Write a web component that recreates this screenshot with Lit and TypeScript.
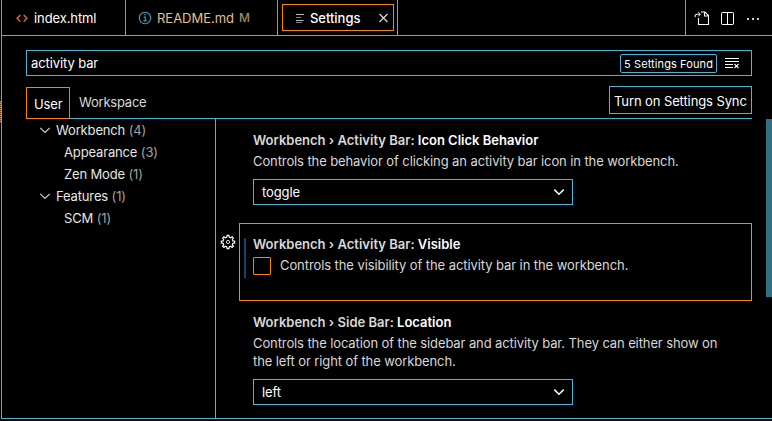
import { LitElement, html, css, svg, nothing } from "lit";
import { customElement, property } from "lit/decorators.js";

const icons: Record<string, unknown> = {
  code: svg`<path d="M6.3 5 3 8.3l3.3 3.3M9.700 5 13 8.300l-3.300 3.300" stroke="#e37933" stroke-width="1.3"/>`,
  info: svg`<circle cx="8" cy="8" r="5.7" stroke="#519aba" stroke-width="1.1"/><path d="M6.7 7.1h1.6v3.7M6.4 10.9h3.4" stroke="#519aba" stroke-width="1.1"/><path d="M7.3 4.6h1.4" stroke="#519aba" stroke-width="1.4"/>`,
  lines: svg`<path d="M4 4.5h8M4 10.5h7.5" stroke="#b9bfc0"/><path d="M4 7.5h5M4 12.5h6" stroke="#818788"/>`,
  close: svg`<path d="m4.500 4 8 8M12.500 4l-8 8" stroke="#e4e4e4" stroke-width="1.1"/>`,
  gotoFile: svg`<path d="M4.500 8v6.500h10V5.500L11 2H7M10.500 2v4h4" stroke="#fff" stroke-width="1.1"/><path d="M1.2 7.200Q.2 4.200 3 4.200h3M4.200 2l2.200 2.200L4.200 6.400" stroke="#fff" stroke-width="1"/>`,
  split: svg`<rect x="1.5" y="2.5" width="12" height="12" rx=".7" stroke="#fff"/><path d="M7.5 2.5v12" stroke="#fff"/>`,
  more: svg`<path d="M2 8h2v2H2zM7 8h2v2h-2zM12 8h2v2h-2z" fill="#d0d0d0"/>`,
  clear: svg`<path d="M1 3.5h14M1 6.5h14M1 9.5h8M1 12.5h8" stroke="#fff"/><path d="m10.5 9 4 4M14.5 9l-4 4" stroke="#fff" stroke-width="1.1"/>`,
  down: svg`<path d="m3.3 5.6 4.7 4.6 4.7-4.6" stroke="#fff" stroke-width="1.5"/>`,
  twistie: svg`<path d="m3.2 5.8 4.8 4.7 4.8-4.7" stroke="#d4d4d4" stroke-width="1.1"/>`,
  gear: svg`<path d="M6.800 3.200 7.100 1.400h1.800l.3 1.800 1.400.6 1.500-1.100 1.300 1.300-1.100 1.500.6 1.400 1.800.3v1.700l-1.800.3-.6 1.400 1.100 1.500-1.300 1.300-1.500-1.100-1.400.6-.3 1.800H7.100l-.3-1.800-1.400-.6-1.500 1.100-1.300-1.300 1.100-1.500-.6-1.400-1.800-.3V7.200l1.800-.3.6-1.400L2.600 4l1.300-1.300 1.500 1.100z" stroke="#fff" stroke-width="1.200"/><circle cx="8" cy="8" r="1.600" stroke="#ddd"/>`,
};

@customElement("ui-icon")
class UiIcon extends LitElement {
  static styles = css`
    :host { display: block; flex: none; width: 16px; height: 16px; }
    svg { display: block; }
  `;
  @property() name = "";
  render() {
    return html`<svg width="16" height="16" viewBox="0 0 16 16" fill="none">${icons[this.name]}</svg>`;
  }
}

@customElement("ui-select")
class UiSelect extends LitElement {
  static styles = css`
    :host {
      display: flex; align-items: center; justify-content: space-between;
      box-sizing: border-box; width: 320px; height: 26px; padding: 0 5px 0 8px;
      border: 1px solid #4fb3d5; color: #fff;
    }
  `;
  @property() value = "";
  render() {
    return html`<span>${this.value}</span><ui-icon name="down"></ui-icon>`;
  }
}

@customElement("setting-item")
class SettingItem extends LitElement {
  static styles = css`
    :host { display: block; color: #d8d8d8; line-height: 18px; }
    .title { font-weight: 600; letter-spacing: 0; white-space: nowrap; }
    .key { color: #fff; }
    .desc { width: 484px; margin-top: 3px; letter-spacing: -0.105px; }
    ui-select { margin-top: 9px; }
    .check { display: flex; gap: 9px; margin-top: 3px; letter-spacing: -0.085px; }
    .box { box-sizing: border-box; width: 18px; height: 18px; margin-top: 1px; border: 1px solid #f38518; border-radius: 1px; }
  `;
  @property() category = "";
  @property() label = "";
  @property() description = "";
  @property() value?: string;
  render() {
    return html`
      <div class="title">${this.category}: <span class="key">${this.label}</span></div>
      ${this.value === undefined
        ? html`<div class="check"><span class="box"></span><span>${this.description}</span></div>`
        : html`<div class="desc">${this.description}</div>`}
      ${this.value === undefined ? nothing : html`<ui-select .value=${this.value}></ui-select>`}
    `;
  }
}

const toc = [
  { label: "Workbench", count: 4, group: true },
  { label: "Appearance", count: 3 },
  { label: "Zen Mode", count: 1 },
  { label: "Features", count: 1, group: true },
  { label: "SCM", count: 1 },
];

@customElement("app-root")
class AppRoot extends LitElement {
  static styles = css`
    :host {
      display: flex; position: relative; box-sizing: border-box; width: 772px; height: 421px;
      padding: 0 0 2px 1px; overflow: hidden; background: #000; color: #fff;
      font: 13px/18px Inter, "Liberation Sans", sans-serif; letter-spacing: -0.1px;
    }
    .editor { display: flex; flex-direction: column; flex: 1; border-left: 1px solid #4fb3d5; border-bottom: 1px solid #4fb3d5; }
    .tabs { display: flex; box-sizing: border-box; height: 36px; border-bottom: 1px solid #4fb3d5; }
    .tab { display: flex; align-items: center; box-sizing: border-box; border-right: 1px solid #4fb3d5; white-space: nowrap; }
    .tab.html { width: 124px; padding-left: 12px; gap: 4px; }
    .tab.md { width: 152px; padding-left: 11px; gap: 4px; color: #e2c08d; letter-spacing: -0.02px; }
    .modified { margin-left: 1px; color: #a28b67; font-size: 12px; font-weight: 500; }
    .tab.active { width: 120px; padding: 4px 3px 4px 4px; }
    .focus { display: flex; align-items: center; box-sizing: border-box; width: 112px; height: 27px; padding: 0 2px 0 9px; gap: 2px; border: 1px solid #f38518; font-weight: 500; letter-spacing: -0.04px; }
    .focus ui-icon:last-child { margin-left: auto; }
    .actions { display: flex; align-items: center; gap: 10px; margin-left: auto; width: 87px; box-sizing: border-box; padding-left: 8px; border-left: 1px solid #4fb3d5; }
    .actions ui-icon:last-child { margin-left: -1px; }
    .search { display: flex; align-items: center; box-sizing: border-box; height: 26px; margin: 14px 20px 0 24px; padding: 0 11px 0 4px; border: 1px solid #4fb3d5; }
    .found { box-sizing: border-box; height: 19px; margin: 0 7px 0 auto; padding: 0 3px; border: 1px solid #4fb3d5; border-radius: 2px; font-size: 11px; line-height: 19px; width: 97px; white-space: nowrap; letter-spacing: 0.1px; }
    .scopes { display: flex; box-sizing: border-box; height: 33px; margin: 10px 20px 0 24px; border-bottom: 1px solid #4fb3d5; }
    .scope { box-sizing: border-box; width: 44px; height: 32px; margin-top: 1px; padding: 7px 0 0 7px; border: 1px solid #f38518; }
    .scope.other { width: auto; border: 0; padding: 6px 0 0 9px; color: #d8d8d8; letter-spacing: -0.22px; }
    .sync { box-sizing: border-box; width: 143px; height: 28px; margin-left: auto; padding: 5px 0 0 4px; border: 1px solid #4fb3d5; white-space: nowrap; }
    .body { display: flex; flex: 1; min-height: 0; }
    .toc { box-sizing: border-box; width: 214px; padding-left: 35px; border-right: 1px solid #4fb3d5; color: #e6e6e6; letter-spacing: -0.15px; }
    .row { display: flex; align-items: center; height: 22px; gap: 3px; padding-left: 27px; white-space: pre; }
    .row.group { padding-left: 0; }
    .count { color: #a0a0a0; }
    .list { flex: 1; padding: 12px 20px 0 23px; min-width: 0; }
    .list setting-item { margin-left: 14px; }
    .selected { display: flex; box-sizing: border-box; width: 513px; height: 78px; margin: 18px 0 12px; padding: 14px 0 0 4px; border: 1px solid #f38518; }
    .bar { width: 2px; height: 40px; margin-right: 7px; background: #0a4772; }
    .list .selected setting-item { margin: -3px 0 0; }
    .gear { position: absolute; left: 220px; top: 234px; }
    .sash { position: absolute; left: 0; top: 101px; width: 1px; height: 22px; background: repeating-linear-gradient(#f38518 0 1px, #5d3308 1px 2px); }
    .thumb { position: absolute; right: 0; top: 119px; width: 6px; height: 178px; background: #317084; }
  `;
  render() {
    return html`
      <div class="editor">
        <div class="tabs">
          <div class="tab html"><ui-icon name="code"></ui-icon><span>index.html</span></div>
          <div class="tab md"><ui-icon name="info"></ui-icon><span>README.md</span><span class="modified">M</span></div>
          <div class="tab active"><div class="focus"><ui-icon name="lines"></ui-icon><span>Settings</span><ui-icon name="close"></ui-icon></div></div>
          <div class="actions"><ui-icon name="gotoFile"></ui-icon><ui-icon name="split"></ui-icon><ui-icon name="more"></ui-icon></div>
        </div>
        <div class="search"><span>activity bar</span><span class="found">5 Settings Found</span><ui-icon name="clear"></ui-icon></div>
        <div class="scopes">
          <div class="scope">User</div><div class="scope other">Workspace</div>
          <div class="sync">Turn on Settings Sync</div>
        </div>
        <div class="body">
          <div class="toc">
            ${toc.map((t) => html`<div class="row ${t.group ? "group" : ""}">${t.group ? html`<ui-icon name="twistie"></ui-icon>` : nothing}<span>${t.label} <span class="count">(${t.count})</span></span></div>`)}
          </div>
          <div class="list">
            <setting-item category="Workbench › Activity Bar" label="Icon Click Behavior" description="Controls the behavior of clicking an activity bar icon in the workbench." value="toggle"></setting-item>
            <div class="selected"><span class="bar"></span><setting-item category="Workbench › Activity Bar" label="Visible" description="Controls the visibility of the activity bar in the workbench."></setting-item></div>
            <setting-item category="Workbench › Side Bar" label="Location" description="Controls the location of the sidebar and activity bar. They can either show on the left or right of the workbench." value="left"></setting-item>
          </div>
        </div>
      </div>
      <ui-icon class="gear" name="gear"></ui-icon>
      <div class="sash"></div>
      <div class="thumb"></div>
    `;
  }
}
